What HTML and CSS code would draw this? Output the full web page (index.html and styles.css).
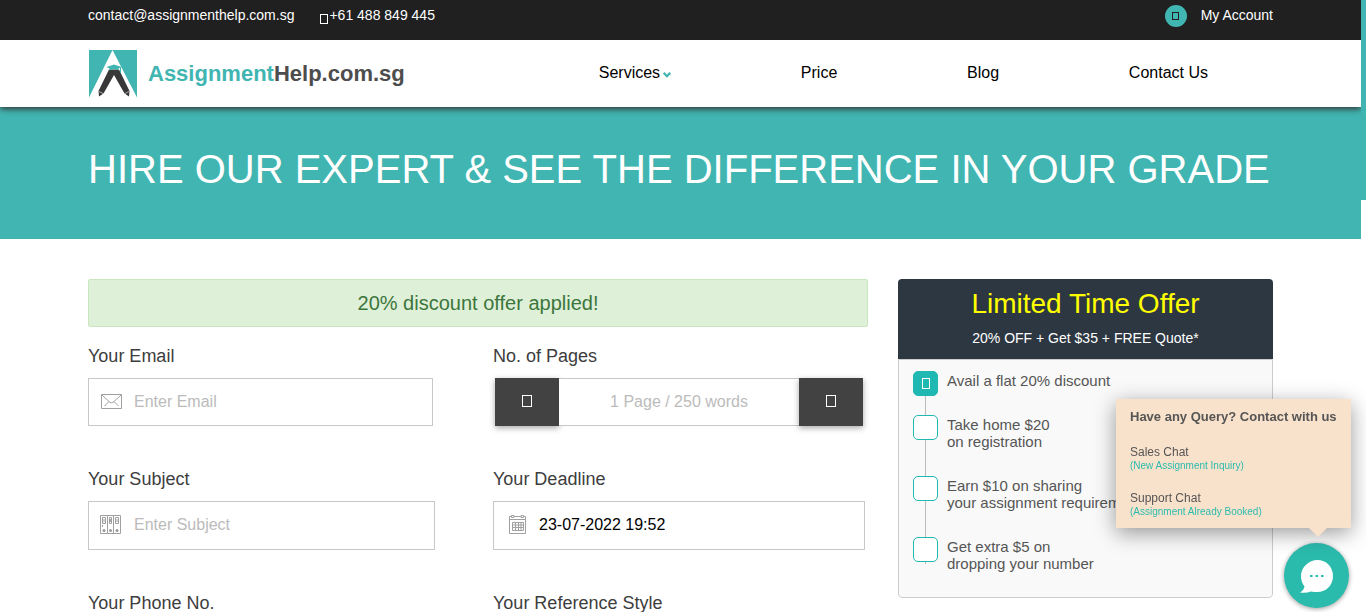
FILE: index.html
```html
<!DOCTYPE html>
<html lang="en">
<head>
<meta charset="utf-8">
<meta name="viewport" content="width=device-width, initial-scale=1">
<title>AssignmentHelp.com.sg</title>
<link rel="stylesheet" href="styles.css">
</head>
<body>
<div class="scroll-track" aria-hidden="true"><div class="scroll-thumb"></div></div>

<div class="topbar container">
  <a class="top-mail" href="#mail">contact@assignmenthelp.com.sg</a>
  <a class="top-phone" href="#phone"><span class="box box-phone"></span>+61 488 849 445</a>
  <a class="account" href="#account"><span class="avatar"><span class="box box-dark"></span></span>My Account</a>
</div>

<header class="header container">
  <a class="brand" href="#home">
    <svg class="brand-mark" viewBox="0 0 49 48" width="49" height="48" aria-hidden="true">
      <path fill="#41b5b1" d="M1 0H24.500L1 47.500ZM24.500 0H49V47.500Z"/>
      <path fill="#383838" d="M21 19.500H31L41.500 41L41 46.500L36.500 43.500L26 25L15.500 43.500L11 46.500L10.500 41Z"/>
      <path stroke="#fff" stroke-width=".6" d="M11 41.500L16 44M41 41.500L36 44"/>
      <path fill="#41b5b1" d="M26 14.500L33.500 17L30.500 18.500V20.500Q26 18 21.500 20.500V18.500L18.500 17ZM32 17.500H33V23H32Z"/>
    </svg>
    <span class="brand-name">Assignment<span class="brand-dark">Help.com.sg</span></span>
  </a>
  <nav class="nav">
    <a href="#services">Services<svg class="chevron" viewBox="0 0 8 6" width="8" height="6" aria-hidden="true"><path d="M.7 .8L4 4.200L7.300 .8" fill="none" stroke="#41b5b1" stroke-width="2.200"/></svg></a>
    <a href="#price">Price</a>
    <a href="#blog">Blog</a>
    <a href="#contact">Contact Us</a>
  </nav>
</header>

<section class="hero container">
  <h1>HIRE OUR EXPERT &amp; SEE THE DIFFERENCE IN YOUR GRADE</h1>
</section>

<main class="main container">
  <form class="order">
    <p class="alert">20% discount offer applied!</p>
    <div class="fields">
      <div class="field">
        <label for="email">Your Email</label>
        <div class="control control-email">
          <svg viewBox="0 0 21 15" width="21" height="15" aria-hidden="true"><g fill="none" stroke="#a0a0a0"><path d="M.5 .5H20.500V14.500H.5Z"/><path d="M1 1L8.500 8Q10.500 9.500 12.500 8L20 1M3.500 12L8 7.500M17.500 12L13 7.500"/></g></svg>
          <input id="email" type="email" placeholder="Enter Email">
        </div>
      </div>
      <div class="field">
        <label for="pages">No. of Pages</label>
        <div class="stepper">
          <button type="button" aria-label="Fewer pages"><span class="box"></span></button>
          <input id="pages" type="text" placeholder="1 Page / 250 words">
          <button type="button" aria-label="More pages"><span class="box"></span></button>
        </div>
      </div>
      <div class="field">
        <label for="subject">Your Subject</label>
        <div class="control control-subject">
          <svg viewBox="0 0 21 19" width="21" height="19" aria-hidden="true"><g fill="none" stroke="#a0a0a0"><path d="M.5 .5H20.500V18.500H.5ZM7.500 1V18M13.500 1V18"/><path d="M2.500 2.500H5.500V8.500H2.500ZM9.500 2.500H11.500V8.500H9.500ZM15.500 2.500H18.500V8.500H15.500Z"/><path d="M4 4V7M10.500 4V7M17 4V7M2.500 10V12"/></g><g fill="#999"><circle cx="4" cy="15.500" r="1.500"/><circle cx="10.500" cy="15.500" r="1.500"/><circle cx="17" cy="15.500" r="1.500"/></g></svg>
          <input id="subject" type="text" placeholder="Enter Subject">
        </div>
      </div>
      <div class="field">
        <label for="deadline">Your Deadline</label>
        <div class="control control-deadline">
          <svg viewBox="0 0 17 19" width="17" height="19" aria-hidden="true"><g fill="none" stroke="#a0a0a0"><path d="M.5 1.500H2M5 1.500H12M15 1.500H16.500V18.500H.5V1.500M.5 4.500H16.500"/><path d="M2.500 .5H5V2.500H2.500ZM12 .5H14.500V2.500H12Z"/><path d="M3.500 7.500H14.500V15.500H3.500ZM3 10H15M3 12.500H15M6.500 7V16M9.500 7V16M12 7V16"/></g></svg>
          <input id="deadline" type="text" value="23-07-2022 19:52">
        </div>
      </div>
      <div class="field">
        <label for="phone">Your Phone No.</label>
        <div class="control"><input id="phone" type="tel"></div>
      </div>
      <div class="field">
        <label for="style">Your Reference Style</label>
        <div class="control"><input id="style" type="text"></div>
      </div>
    </div>
  </form>

  <aside class="offer">
    <div class="offer-head">
      <h2>Limited Time Offer</h2>
      <p>20% OFF + Get $35 + FREE Quote*</p>
    </div>
    <ul class="steps">
      <li><span class="tick tick-on"><span class="box box-small"></span></span><p>Avail a flat 20% discount</p></li>
      <li><span class="tick"></span><p>Take home $20<br>on registration</p></li>
      <li><span class="tick"></span><p>Earn $10 on sharing<br>your assignment requirements</p></li>
      <li><span class="tick"></span><p>Get extra $5 on<br>dropping your number</p></li>
    </ul>
  </aside>
</main>

<div class="chat">
  <div class="chat-card">
    <h3>Have any Query? Contact with us</h3>
    <a href="#sales">Sales Chat<small>(New Assignment Inquiry)</small></a>
    <a href="#support">Support Chat<small>(Assignment Already Booked)</small></a>
  </div>
  <button class="chat-button" type="button" aria-label="Open chat">
    <svg viewBox="0 0 34 34" width="34" height="34" aria-hidden="true"><path fill="#fff" d="M17.500 1C26 1 33 7.500 33 17S26 33 17.500 33Q14 33 11 32.500Q6 34.500 0 33.500Q4 31 4.500 27.500Q1 23 1 17C1 8 9 1 17.500 1Z"/><path fill="#2bbbad" d="M10 16h2.500v2H10ZM15.500 16H18v2H15.500ZM21 16h2.500v2H21Z"/></svg>
  </button>
</div>
</body>
</html>
```

FILE: styles.css
```css
* { box-sizing: border-box; }

html { scrollbar-width: none; }

body {
  margin: 0;
  padding-right: 5px;
  background: #fff;
  color: #333;
  font: 16px/20px "Liberation Sans", Arial, sans-serif;
}

h1, h2, h3, p, ul { margin: 0; padding: 0; }
a { color: inherit; text-decoration: none; }
svg { flex: none; }
input, button { font: inherit; }

.container { padding-left: 88px; padding-right: 88px; }

.scroll-track { position: fixed; top: 0; right: 0; bottom: 0; width: 5px; background: #fff; }
.scroll-thumb { height: 200px; background: #41b5b1; }

.box { display: inline-block; width: 10px; height: 12px; border: 1px solid #fff; }
.box-phone { width: 8px; height: 10px; margin-right: 1px; vertical-align: -4px; }
.box-dark { width: 7px; height: 8px; border-color: #202020; }
.box-small { width: 8px; height: 11px; }

/* Top bar */
.topbar {
  display: flex;
  align-items: flex-start;
  height: 40px;
  padding-top: 5px;
  background: #202020;
  color: #fff;
  font-size: 14px;
}
.top-phone { margin-left: 26px; }
.account { display: flex; align-items: flex-start; margin-left: auto; }
.avatar {
  display: grid;
  place-items: center;
  width: 22px;
  height: 22px;
  margin-right: 14px;
  border-radius: 50%;
  background: #41b5b1;
}

/* Header */
.header {
  position: relative;
  display: flex;
  align-items: center;
  height: 67px;
  background: #fff;
  box-shadow: 0 2px 6px #333;
  clip-path: inset(0 0 -12px 0);
}
.brand { display: flex; align-items: center; gap: 11px; }
.brand-name { color: #41b5b1; font-size: 22px; font-weight: bold; line-height: 28px; }
.brand-dark { color: #4d4d4d; }
.nav {
  display: flex;
  flex: 1;
  justify-content: space-between;
  margin-left: 194px;
  padding: 0 65px 2px 0;
  color: #000;
}
.chevron { margin-left: 3px; }

/* Hero */
.hero { padding-top: 38px; padding-bottom: 46px; background: #41b5b1; }
.hero h1 { color: #fff; font-size: 40px; font-weight: normal; line-height: 48px; }

/* Order form */
.main { display: flex; align-items: flex-start; gap: 30px; padding-top: 40px; padding-bottom: 40px; }
.order { flex: 1; }
.alert {
  padding: 11px;
  border: 1px solid #c9e6bd;
  border-radius: 2px;
  background: #dff0d8;
  color: #3c763d;
  font-size: 20px;
  line-height: 24px;
  text-align: center;
}
.fields { display: grid; grid-template-columns: 375px 1fr; column-gap: 30px; row-gap: 41px; margin-top: 17px; }
.field label { display: block; margin-bottom: 9px; color: #3d3d3d; font-size: 18px; line-height: 25px; }
.control {
  display: flex;
  align-items: center;
  height: 49px;
  margin-right: 28px;
  padding: 0 11px 2px;
  border: 1px solid #c8c8c8;
}
.control input { flex: 1; min-width: 0; padding: 0; border: 0; outline: 0; background: none; color: #000; }
.field input::placeholder { color: #bbb; opacity: 1; }
.control-email { height: 48px; margin-right: 30px; padding: 0 12px; }
.control-email svg { margin: 0 12px 2px 0; }
.control-subject svg { margin-right: 13px; }
.control-deadline svg { margin-right: 13px; }
.fields .field:nth-child(even) .control { margin-right: 3px; padding-left: 15px; }
.stepper { display: flex; margin: 0 5px 0 2px; height: 48px; }
.stepper input {
  flex: 1;
  min-width: 0;
  padding: 0;
  border: solid #c8c8c8;
  border-width: 1px 0;
  outline: 0;
  text-align: center;
}
.stepper button {
  display: grid;
  place-items: center;
  width: 64px;
  padding: 0 0 2px;
  border: 0;
  background: #424242;
  box-shadow: 0 2px 6px rgba(0, 0, 0, 0.35);
}

/* Offer */
.offer { width: 375px; border-radius: 4px; overflow: hidden; }
.offer-head { padding: 9px 10px 11px; background: #2d3742; text-align: center; }
.offer-head h2 { color: #ff0; font-size: 28px; font-weight: normal; line-height: 32px; }
.offer-head p { margin-top: 8px; color: #fff; font-size: 14px; line-height: 20px; }
.steps {
  padding: 11px 15px 25px 14px;
  border: 1px solid #ccc;
  border-radius: 0 0 4px 4px;
  background: #f9f9f9;
  color: #555;
  font-size: 15px;
  line-height: 17px;
  list-style: none;
}
.steps li { display: flex; align-items: flex-start; gap: 9px; padding-bottom: 26px; background: linear-gradient(#bbb, #bbb) 12px 0 / 1px 100% no-repeat; }
.steps li:first-child { padding-bottom: 19px; }
.steps li:last-child { padding-bottom: 0; background-size: 1px 27px; }
.steps p { padding-top: 1px; white-space: nowrap; }
.tick { display: grid; place-items: center; flex: none; width: 25px; height: 25px; border: 1px solid #20b8b2; border-radius: 5px; background: #fff; }
.tick-on { background: #20b8b2; }

/* Chat */
.chat { position: fixed; right: 15px; bottom: 4px; display: flex; flex-direction: column; align-items: flex-end; gap: 15px; }
.chat-card {
  position: relative;
  width: 235px;
  padding: 9px 14px 10px;
  background: #f9e2cc;
  box-shadow: 0 5px 20px rgba(0, 0, 0, 0.4);
  color: #555;
}
.chat-card::after {
  content: "";
  position: absolute;
  right: 24px;
  bottom: -9px;
  border: solid transparent;
  border-width: 9px 9px 0;
  border-top-color: #f9e2cc;
}
.chat-card h3 { font-size: 13px; line-height: 18px; white-space: nowrap; }
.chat-card a { display: block; margin-top: 19px; font-size: 12px; line-height: 14px; }
.chat-card small { display: block; color: #2bbbad; font-size: 10px; line-height: 13px; }
.chat-button {
  display: grid;
  place-items: center;
  width: 65px;
  height: 65px;
  margin-right: 2px;
  padding: 0;
  border: 0;
  border-radius: 50%;
  background: #2bbbad;
  box-shadow: 0 1px 5px rgba(0, 0, 0, 0.4);
}
```
